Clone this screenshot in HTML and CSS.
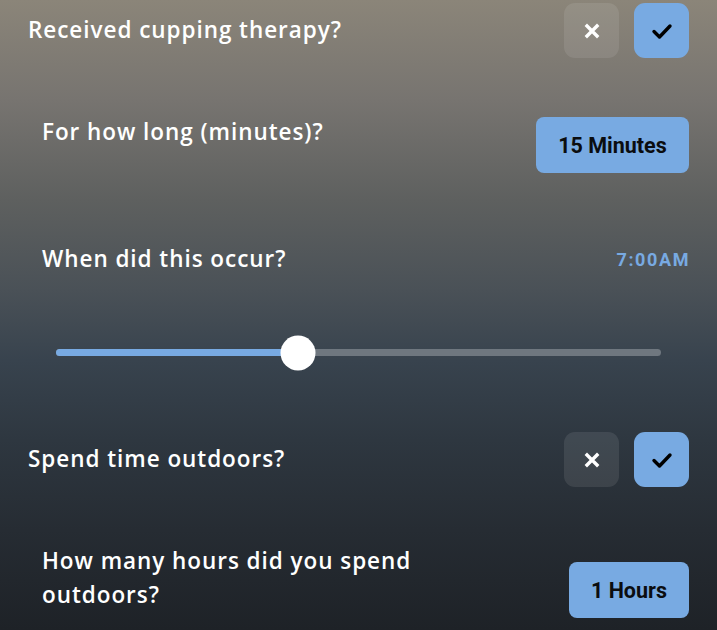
FILE: index.html
```html
<!DOCTYPE html>
<html>
<head>
<meta charset="utf-8">
<link rel="stylesheet" href="styles.css">
</head>
<body>
<div class="screen">
  <div class="row main first">
    <div class="label">Received cupping therapy?</div>
    <div class="toggle">
      <button class="tbtn no"><svg width="16" height="16" viewBox="0 0 16 16"><path d="M3 3 L13 13 M13 3 L3 13" stroke="#fff" stroke-width="3.4" stroke-linecap="square" fill="none"/></svg></button>
      <button class="tbtn yes"><svg width="22" height="18" viewBox="0 0 22 18"><path d="M3 9.5 L8.5 15 L19 4" stroke="#000" stroke-width="3.4" stroke-linecap="round" stroke-linejoin="round" fill="none"/></svg></button>
    </div>
  </div>
  <div class="sub">
    <div class="row duration">
      <div class="label">For how long (minutes)?</div>
      <button class="pill">15 Minutes</button>
    </div>
    <div class="row when">
      <div class="label">When did this occur?</div>
      <div class="time">7:00AM</div>
    </div>
    <div class="slider">
      <div class="track">
        <div class="fill" style="width: 40%"></div>
        <div class="thumb" style="left: 40%"></div>
      </div>
    </div>
  </div>
  <div class="row main second">
    <div class="label">Spend time outdoors?</div>
    <div class="toggle">
      <button class="tbtn no"><svg width="16" height="16" viewBox="0 0 16 16"><path d="M3 3 L13 13 M13 3 L3 13" stroke="#fff" stroke-width="3.4" stroke-linecap="square" fill="none"/></svg></button>
      <button class="tbtn yes"><svg width="22" height="18" viewBox="0 0 22 18"><path d="M3 9.5 L8.5 15 L19 4" stroke="#000" stroke-width="3.4" stroke-linecap="round" stroke-linejoin="round" fill="none"/></svg></button>
    </div>
  </div>
  <div class="sub">
    <div class="row hours">
      <div class="label wrap">How many hours did you spend outdoors?</div>
      <button class="pill small">1 Hours</button>
    </div>
  </div>
</div>
</body>
</html>
```

FILE: styles.css
```css
html, body {
  margin: 0;
  padding: 0;
}
body {
  width: 717px;
  height: 630px;
  overflow: hidden;
  background: linear-gradient(to bottom,
    #8b8579 0px,
    #777470 100px,
    #5e605f 200px,
    #4a5157 290px,
    #38434e 360px,
    #2e3740 440px,
    #262c33 530px,
    #1e2227 630px);
  font-family: "Open Sans", "Lato", sans-serif;
  color: #fff;
}
.screen {
  padding: 3px 28px 0 28px;
}
.row {
  display: flex;
  align-items: center;
  justify-content: space-between;
}
.label {
  font-size: 22.5px;
  font-weight: 600;
  line-height: 30px;
  letter-spacing: 0.95px;
}
.main .label {
  margin-top: -2px;
}
.toggle {
  display: flex;
  gap: 15px;
}
.tbtn {
  width: 55px;
  height: 55px;
  border: none;
  border-radius: 11px;
  padding: 0;
  display: flex;
  align-items: center;
  justify-content: center;
}
.tbtn.no {
  background: rgba(255, 255, 255, 0.09);
}
.tbtn.yes {
  background: #78aae2;
}
.sub {
  padding-left: 14px;
}
.duration {
  margin-top: 59px;
  align-items: flex-start;
}
.pill {
  height: 56px;
  border: none;
  border-radius: 8px;
  background: #78aae2;
  color: #0b0d10;
  font-family: "Roboto", "DejaVu Sans", sans-serif;
  font-weight: 700;
  font-size: 21.5px;
  width: 153px;
  padding: 0;
}
.pill.small {
  width: 120px;
  margin-top: 18px;
}
.when {
  margin-top: 71px;
  height: 30px;
}
.time {
  font-family: "Roboto", sans-serif;
  font-weight: 700;
  font-size: 18px;
  color: #78aae2;
  letter-spacing: 1.6px;
  margin-right: -1px;
}
.slider {
  padding: 0 28px 0 14px;
  margin-top: 61px;
  height: 35px;
  display: flex;
  align-items: center;
}
.track {
  position: relative;
  flex: 1;
  height: 7px;
  border-radius: 4px;
  background: #6f777f;
}
.fill {
  height: 100%;
  border-radius: 4px;
  background: #78aae2;
}
.thumb {
  position: absolute;
  top: 50%;
  width: 35px;
  height: 35px;
  border-radius: 50%;
  background: #fff;
  transform: translate(-50%, -50%);
}
.second {
  margin-top: 62px;
}
.hours {
  margin-top: 57px;
  align-items: flex-start;
}
.label.wrap {
  width: 400px;
  line-height: 34px;
}
```
